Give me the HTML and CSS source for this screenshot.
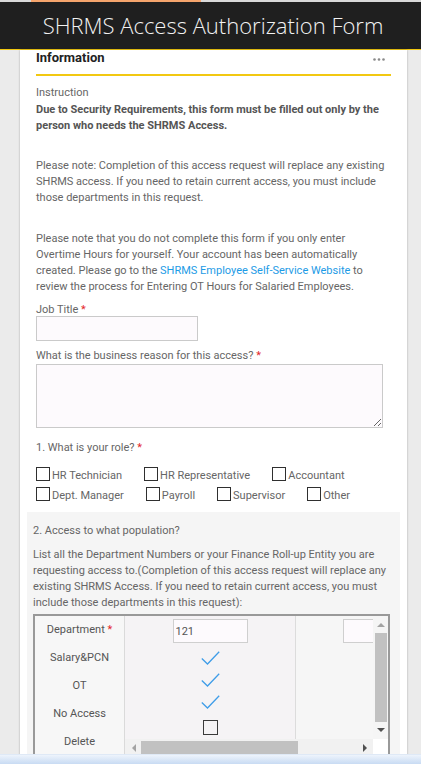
FILE: index.html
```html
<!DOCTYPE html>
<html lang="en">
<head>
<meta charset="utf-8">
<title>SHRMS Access Authorization Form</title>
<link rel="stylesheet" href="styles.css">
</head>
<body>
<div class="progress"><div class="progress-fill"></div></div>
<header class="titlebar"><h1>SHRMS Access Authorization Form</h1></header>
<main class="card">
  <div class="section-head">
    <h2>Information</h2>
    <svg class="dots" width="12" height="3" viewBox="0 0 12 3"><circle cx="1.5" cy="1.5" r="1.3" fill="#8a8a8a"/><circle cx="6" cy="1.5" r="1.3" fill="#8a8a8a"/><circle cx="10.5" cy="1.5" r="1.3" fill="#8a8a8a"/></svg>
  </div>
  <p class="instr-label">Instruction</p>
  <p class="instr-bold">Due to Security Requirements, this form must be filled out only by the person who needs the SHRMS Access.</p>
  <p class="note">Please note: Completion of this access request will replace any existing SHRMS access. If you need to retain current access, you must include those departments in this request.</p>
  <p class="note2">Please note that you do not complete this form if you only enter Overtime Hours for yourself. Your account has been automatically created. Please go to the <a class="link" href="#">SHRMS Employee Self-Service Website</a> to review the process for Entering OT Hours for Salaried Employees.</p>
  <label class="field-label">Job Title <span class="req">*</span></label>
  <input class="text-input" type="text">
  <label class="field-label">What is the business reason for this access? <span class="req">*</span></label>
  <textarea class="text-area"></textarea>
  <p class="role-q">1. What is your role? <span class="req">*</span></p>
  <div class="roles">
    <div class="role-row">
      <span class="role"><span class="cb"></span>HR Technician</span>
      <span class="role"><span class="cb"></span>HR Representative</span>
      <span class="role"><span class="cb"></span>Accountant</span>
    </div>
    <div class="role-row">
      <span class="role"><span class="cb"></span>Dept. Manager</span>
      <span class="role"><span class="cb"></span>Payroll</span>
      <span class="role"><span class="cb"></span>Supervisor</span>
      <span class="role"><span class="cb"></span>Other</span>
    </div>
  </div>
  <section class="panel">
    <h3>2. Access to what population?</h3>
    <p class="panel-text">List all the Department Numbers or your Finance Roll-up Entity you are requesting access to.(Completion of this access request will replace any existing SHRMS Access. If you need to retain current access, you must include those departments in this request):</p>
    <div class="grid-table">
      <div class="row-labels">
        <span>Department <span class="req">*</span></span>
        <span>Salary&amp;PCN</span>
        <span>OT</span>
        <span>No Access</span>
        <span>Delete</span>
      </div>
      <div class="scroller">
        <div class="scroll-content">
          <div class="col col-a">
            <input class="cell-input" type="text" value="121">
            <svg class="check first" width="19" height="14" viewBox="0 0 19 14"><polyline points="0.8,7.5 6.5,13 18.2,0.8" fill="none" stroke="#3f9de8" stroke-width="1.3"/></svg>
            <svg class="check" width="19" height="14" viewBox="0 0 19 14"><polyline points="0.8,7.5 6.5,13 18.2,0.8" fill="none" stroke="#3f9de8" stroke-width="1.3"/></svg>
            <svg class="check" width="19" height="14" viewBox="0 0 19 14"><polyline points="0.8,7.5 6.5,13 18.2,0.8" fill="none" stroke="#3f9de8" stroke-width="1.3"/></svg>
            <span class="cell-cb"></span>
          </div>
          <div class="col col-b">
            <input class="cell-input small" type="text">
          </div>
        </div>
        <div class="vscroll">
          <span class="arrow-up"></span>
          <span class="vthumb"></span>
          <span class="arrow-down"></span>
        </div>
        <div class="hscroll">
          <span class="arrow-left"></span>
          <span class="hthumb"></span>
          <span class="arrow-right"></span>
        </div>
        <div class="corner"></div>
      </div>
    </div>
  </section>
</main>
<div class="taskbar"></div>
</body>
</html>
```
FILE: styles.css
```css
* { box-sizing: border-box; }
html, body { margin: 0; height: 764px; overflow: hidden; }
body {
  background: #ebebeb;
  font-family: Roboto, "Liberation Sans", sans-serif;
  font-size: 11px;
  line-height: 16px;
  color: #666;
}
.progress { height: 2px; background: #d9d9d9; padding-left: 31px; }
.progress-fill { width: 170px; height: 2px; background: #f5a46c; }
.titlebar {
  height: 48px;
  background: #1f1f1f;
  border-bottom: 1px solid #f2c811;
  display: flex;
  align-items: center;
  justify-content: center;
}
.titlebar h1 {
  margin: 0 0 1px 5px;
  font-family: "Open Sans", sans-serif;
  font-weight: 300;
  font-size: 22px;
  line-height: 30px;
  color: #f2f2f2;
}
.card {
  margin-left: 20px;
  width: 387px;
  height: 720px;
  background: #fff;
  box-shadow: 0 0 2px rgba(0,0,0,.28);
  padding: 0 16px;
}
.section-head {
  height: 26px;
  display: flex;
  justify-content: space-between;
  align-items: flex-start;
  border-bottom: 2px solid #f2c811;
}
.section-head h2 {
  margin: 0;
  font-size: 13px;
  line-height: 15px;
  font-weight: bold;
  color: #222;
}
.dots { margin: 8px 6px 0 0; }
p { margin: 0; }
.instr-label { margin-top: 9px; }
.instr-bold { margin-top: 1px; font-weight: bold; color: #555; }
.note { margin-top: 24px; }
.note2 { margin-top: 25px; }
.link { color: #1d9be6; text-decoration: none; }
.req { color: #e4262b; }
.field-label { display: block; margin-top: 7px; }
.text-input {
  display: block;
  width: 162px;
  height: 25px;
  margin: -2px 0 0;
  border: 1px solid #cacaca;
  background: #fdfafd;
}
.text-area {
  display: block;
  width: 347px;
  height: 64px;
  margin: 0;
  border: 1px solid #cacaca;
  background: #fdfafd;
  resize: both;
}
.role-q { margin-top: 12px; }
.roles { margin-top: 12px; display: flex; flex-direction: column; gap: 6px; }
.role-row { display: flex; height: 14px; }
.role {
  display: flex;
  align-items: center;
  margin-right: 22px;
  line-height: 14px;
  padding-top: 2px;
}
.role .cb {
  width: 14px;
  height: 14px;
  border: 1px solid #2f2f2f;
  margin-right: 2px;
  flex: none;
  position: relative;
  top: -2px;
}
.panel {
  margin: 10px -9px 0;
  padding: 11px 6px 0;
  background: #f5f5f5;
  height: 300px;
}
.panel h3 { margin: 0; font-size: 11px; font-weight: normal; line-height: 16px; }
.panel-text { margin-top: 8px; }
.grid-table {
  margin-top: 3px;
  width: 357px;
  border: 2px solid #999;
  display: grid;
  grid-template-columns: 90px 1fr;
  height: 160px;
}
.row-labels {
  background: #f7f7f7;
  border-right: 1px solid #dadada;
  display: flex;
  flex-direction: column;
  align-items: center;
  padding-top: 7px;
  gap: 14px;
  color: #555;
}
.row-labels span { line-height: 14px; }
.scroller {
  display: grid;
  grid-template-columns: 248px 15px;
  grid-template-rows: 123px 15px;
}
.scroll-content { display: flex; overflow: hidden; }
.col { display: flex; flex-direction: column; align-items: center; }
.col-a { width: 171px; flex: none; background: #f5f3f5; border-right: 1px solid #dcdcdc; }
.col-b { flex: 1; background: #f6f6f6; align-items: flex-start; padding-left: 47px; overflow: hidden; }
.cell-input {
  margin: 3px 0 0;
  width: 75px;
  height: 24px;
  border: 1px solid #cfcfcf;
  background: #fdfafd;
  font-family: Roboto, "Liberation Sans", sans-serif;
  font-size: 11px;
  color: #555;
  padding: 0 2px;
  flex: none;
}
.cell-input.small { width: 45px; }
.check { margin-top: 8px; flex: none; }
.cell-cb {
  margin-top: 11px;
  width: 15px;
  height: 15px;
  border: 1px solid #3a3a3a;
  flex: none;
}
.vscroll {
  background: #f5f5f5;
  display: flex;
  flex-direction: column;
  align-items: center;
  padding-top: 7px;
}
.arrow-up { width: 0; height: 0; border-left: 4px solid transparent; border-right: 4px solid transparent; border-bottom: 4px solid #a3a3a3; }
.vthumb { margin-top: 6px; width: 12px; height: 89px; background: #c1c1c1; }
.arrow-down { margin-top: 6px; width: 0; height: 0; border-left: 4px solid transparent; border-right: 4px solid transparent; border-top: 4px solid #505050; }
.hscroll {
  background: #f1f1f1;
  display: flex;
  align-items: flex-start;
  padding: 2px 6px 0 7px;
}
.arrow-left { margin-top: 3px; width: 0; height: 0; border-top: 4px solid transparent; border-bottom: 4px solid transparent; border-right: 4px solid #a3a3a3; }
.hthumb { margin-left: 5px; width: 157px; height: 13px; background: #c1c1c1; }
.arrow-right { margin: 3px 0 0 auto; width: 0; height: 0; border-top: 4px solid transparent; border-bottom: 4px solid transparent; border-left: 4px solid #505050; }
.corner { background: #fff; }
.taskbar {
  position: fixed;
  left: 0;
  right: 0;
  bottom: 0;
  height: 10px;
  background: linear-gradient(#eef4fc, #c8dbf3);
  border-top: 1px solid #dfe9f6;
}
```
